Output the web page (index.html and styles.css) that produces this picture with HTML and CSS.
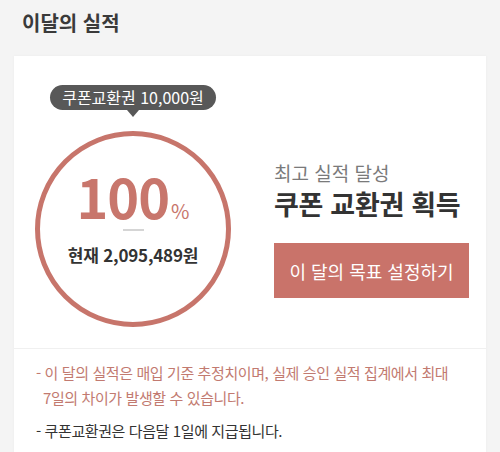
FILE: index.html
```html
<!DOCTYPE html>
<html lang="ko">
<head>
<meta charset="utf-8">
<link rel="stylesheet" href="styles.css">
</head>
<body>
<div class="page">
  <h1 class="title">이달의 실적</h1>
  <div class="card">
    <div class="top">
      <div class="gauge">
        <div class="tip">쿠폰교환권 10,000원</div>
        <div class="ring">
          <div class="pct"><span class="num">100</span><span class="unit">%</span></div>
          <div class="dash"></div>
          <div class="now">현재 2,095,489원</div>
        </div>
      </div>
      <div class="info">
        <div class="sub">최고 실적 달성</div>
        <div class="main">쿠폰 교환권 획득</div>
        <button class="btn">이 달의 목표 설정하기</button>
      </div>
    </div>
    <div class="notes">
      <p class="note warn">- 이 달의 실적은 매입 기준 추정치이며, 실제 승인 실적 집계에서 최대<br>7일의 차이가 발생할 수 있습니다.</p>
      <p class="note">- 쿠폰교환권은 다음달 1일에 지급됩니다.</p>
    </div>
  </div>
</div>
</body>
</html>
```
FILE: styles.css
```css
* { box-sizing: border-box; }
html, body { margin: 0; padding: 0; }
body {
  background: #f4f4f4;
  font-family: "Noto Sans CJK KR", "Noto Sans", sans-serif;
  color: #333;
  width: 500px;
  height: 452px;
  overflow: hidden;
}
.page { padding: 0 14px; }
.title {
  margin: 0;
  padding: 8px 0 0 8px;
  height: 56px;
  font-size: 20px;
  font-weight: 700;
  color: #3a3a3a;
  letter-spacing: 0;
  line-height: 30px;
}
.card {
  background: #fff;
  box-shadow: 0 0 3px rgba(0,0,0,0.04);
}
.top {
  display: flex;
  align-items: flex-start;
  padding: 29px 0 21px 21px;
  border-bottom: 1px solid #f0f0f0;
}
.gauge {
  width: 196px;
  display: flex;
  flex-direction: column;
  align-items: center;
}
.tip {
  position: relative;
  background: #585858;
  color: #fff;
  font-size: 16px;
  height: 25px;
  line-height: 25px;
  padding: 0 12px;
  border-radius: 13px;
  letter-spacing: 0;
  margin-bottom: 21px;
}
.tip::after {
  content: "";
  position: absolute;
  left: 50%;
  top: 25px;
  margin-left: -6px;
  border-left: 6px solid transparent;
  border-right: 6px solid transparent;
  border-top: 7px solid #585858;
}
.ring {
  width: 196px;
  height: 196px;
  border: 5px solid #c7756b;
  border-radius: 50%;
  display: flex;
  flex-direction: column;
  align-items: center;
  padding-top: 30px;
}
.pct {
  color: #c8766c;
  line-height: 60px;
  height: 60px;
  display: flex;
  align-items: baseline;
}
.num {
  font-size: 54px;
  font-weight: 700;
  letter-spacing: -1px;
}
.unit {
  font-size: 20px;
  margin-left: 2px;
}
.dash {
  width: 21px;
  height: 2px;
  background: #d5d5d5;
  margin-top: 3px;
}
.now {
  margin-top: 11px;
  font-size: 17px;
  font-weight: 700;
  color: #333;
  letter-spacing: -0.2px;
}
.info {
  margin-left: 43px;
  padding-top: 75px;
  display: flex;
  flex-direction: column;
  align-items: flex-start;
}
.sub {
  font-size: 19px;
  color: #7a7a7a;
  line-height: 25px;
  letter-spacing: 0;
}
.main {
  font-size: 27px;
  font-weight: 700;
  color: #333;
  line-height: 38px;
  letter-spacing: -0.3px;
}
.btn {
  margin-top: 20px;
  width: 195px;
  height: 55px;
  border: 0;
  background: #c9736a;
  color: #fff;
  font-family: inherit;
  font-size: 18px;
  letter-spacing: 0;
  padding: 0;
}
.notes {
  padding: 11px 22px 10px 22px;
}
.note {
  margin: 0 0 8px;
  font-size: 15px;
  line-height: 25px;
  color: #333;
  letter-spacing: -0.4px;
  padding-left: 7px;
  text-indent: -7px;
}
.note.warn { color: #c27a70; }
```
